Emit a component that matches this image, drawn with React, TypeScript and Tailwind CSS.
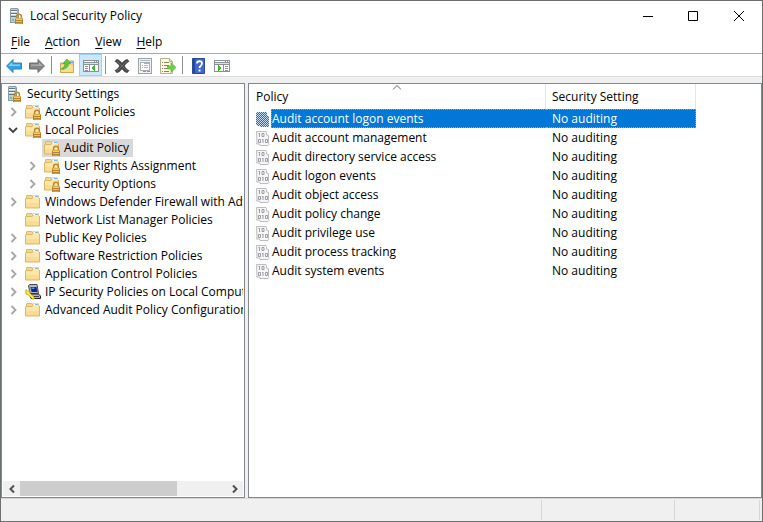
import type { ReactNode } from "react";

function Lock() {
  return (
    <g>
      <path d="M9.600 10.500V8.600a2.400 2.400 0 0 1 4.800 0v1.900" fill="none" stroke="#b58b35" strokeWidth="1.500" />
      <rect x="8" y="10" width="8" height="6" fill="#b5842a" />
      <rect x="8" y="10" width="8" height="1" fill="#dcae4c" />
      <rect x="9" y="11" width="6" height="1" fill="#f0cd74" />
      <rect x="9" y="13" width="6" height="1" fill="#ecc260" />
      <rect x="9" y="15" width="6" height="1" fill="#d29f3c" />
    </g>
  );
}

function ServerIcon() {
  return (
    <svg viewBox="0 0 16 16" className="size-4 shrink-0" aria-hidden="true">
      <path d="M1 1 2 0h7l1 2v13H1z" fill="#8b9ba6" />
      <path d="M2 1h6v13H2z" fill="#c3d0d8" />
      <path d="M8 1h1v13H8z" fill="#a2b1bb" />
      <path d="M2 2h6v1H2zM2 5h6v1H2zM2 8h6v1H2z" fill="#62727e" />
      <path d="M2 3h6v1H2zM2 6h6v1H2z" fill="#f3f8fb" />
      <rect x="3" y="11" width="2" height="2" fill="#5bd46e" />
      <g transform="translate(-2 0)"><Lock /></g>
    </svg>
  );
}

function FolderIcon({ locked = false }: { locked?: boolean }) {
  return (
    <svg viewBox="0 0 16 16" className="size-4 shrink-0" aria-hidden="true">
      <path d="M1 4.500V2l1-1h5l1 1.500h6V14H1z" fill="#dfb968" />
      <path d="M2 2h5v2H2z" fill="#f4d88f" />
      <path d="M8 1.500h5.500V4H8z" fill="#fff" stroke="#d8bf85" strokeWidth=".6" />
      <path d="M10 2h3v1h-3z" fill="#6dbce8" />
      <path d="M1 5h6l1-1h6.500v9.500H1z" fill="#fbe5a8" />
      <path d="M1 9h13.500v4.500H1z" fill="#f8dc94" />
      <path d="M.5 4.500v9.500h14V4" fill="none" stroke="#dcb665" />
      {locked && <Lock />}
    </svg>
  );
}

function ComputerIcon() {
  return (
    <svg viewBox="0 0 16 16" className="size-4 shrink-0" aria-hidden="true">
      <path d="M3.500 1.500 5 .5h7l1.500 9H5z" fill="#b9bcc4" stroke="#45474d" />
      <path d="M5.500 3h6l1 5h-6z" fill="#10238c" />
      <path d="M6.500 3.500h3v1.500h-3z" fill="#49a3ec" />
      <path d="m5 11.500 1.500-1.500h7l2 2v2.500H6z" fill="#b6b6ba" stroke="#222" />
      <path d="M9 12.500h5" stroke="#444" />
      <path d="M.8 5.500 3 7.500l1.500-1 .5 3 5 4.500-2 1.500-4.500-4.500L1 10z" fill="#ffe51f" stroke="#a88c00" strokeWidth=".6" />
      <path d="m2 7.500 2 2 4 4.500" fill="none" stroke="#fff9a4" />
    </svg>
  );
}

function PolicyIcon({ selected = false }: { selected?: boolean }) {
  return (
    <svg viewBox="0 0 14 16" className="h-4 w-3.5 shrink-0" aria-hidden="true">
      <defs>
        <pattern id="policy-dither" width="2" height="2" patternUnits="userSpaceOnUse">
          <path d="M0 0h2v2H0z" fill="#c4dcf0" />
          <path d="M0 0h1v1H0zM1 1h1v1H1z" fill="#0078d7" />
        </pattern>
      </defs>
      {selected ? (
        <path d="M0 2 1 1h9l1 1v2l2 1v10l-1 1H4l-1-1H1l-1-1z" fill="url(#policy-dither)" shapeRendering="crispEdges" />
      ) : (
        <>
          <path d="M.5 1.500h9.500l.5 1v2.500l2 .5v8l.5 1-1 1H4l-.5-1.500h-3l.5-1z" fill="#f6f6f6" stroke="#bcbcbc" />
          <g fill="none" stroke="#9592a2" strokeWidth=".9">
            <path d="M3.500 3v4M2.500 3.500h1M6 3.500h2v3H6zM2.500 9.500h2v3h-2zM7 9v4M6 9.500h1M9.500 9.500h2v3h-2z" />
          </g>
        </>
      )}
    </svg>
  );
}

function BackIcon() {
  return (
    <svg viewBox="0 0 16 16" className="size-4" aria-hidden="true">
      <path d="M.6 8 7 1.500v3.500h8.500v6H7v3.500z" fill="#2fa4e6" stroke="#3c7fa9" />
      <path d="M2.300 8 6 4.300v2.200h8v1.200z" fill="#86d3f7" />
    </svg>
  );
}

function ForwardIcon() {
  return (
    <svg viewBox="0 0 16 16" className="size-4" aria-hidden="true">
      <path d="M15.400 8 9 1.500v3.500H.5v6H9v3.500z" fill="#858585" stroke="#6a6a6a" />
      <path d="M13.700 8 10 4.300v2.200H2v1.200z" fill="#b0b0b0" />
    </svg>
  );
}

function UpFolderIcon() {
  return (
    <svg viewBox="0 0 16 16" className="size-4" aria-hidden="true">
      <path d="M1.500 5h5l1-2h7v11.500h-13z" fill="#f1cc74" stroke="#cda650" />
      <path d="M10 4h4v1h-4z" fill="#64b3dc" />
      <path d="M2 7h12v7H2z" fill="#f8dc91" />
      <path d="M2.500 10.500C5 9.500 6 7.500 6 5.500H4L8 1l3.500 4.500h-2c0 3.500-2.500 5.500-7 6z" fill="#58c943" stroke="#3f9e34" strokeWidth=".6" />
    </svg>
  );
}

function PaneIcon({ action = false }: { action?: boolean }) {
  return (
    <svg viewBox="0 0 16 16" className="size-4" shapeRendering="crispEdges" aria-hidden="true">
      <path d="M0 2h16v12H0z" fill="#8b9297" />
      <path d="M1 3h10v1H1zM12 3h1v1h-1zM14 3h1v1h-1z" fill="#fff" />
      <path d="M1 5h14v1H1z" fill="#dde2e4" />
      {action ? (
        <>
          <path d="M1 7h8v6H1zM10 7h5v6h-5z" fill="#fff" />
          <path d="M4 7h1v1h1v1h1v2H6v1H5v1H4z" fill="#43b52b" />
          <path d="M11 8h3v1h-3zM11 10h3v1h-3zM11 12h3v1h-3z" fill="#8b9297" />
        </>
      ) : (
        <>
          <path d="M1 7h5v6H1zM7 7h8v6H7z" fill="#fff" />
          <path d="M2 8h3v1H2zM2 10h3v1H2zM2 12h3v1H2z" fill="#8b9297" />
          <path d="M12 7v6h-1v-1h-1v-1H9V9h1V8h1V7z" fill="#43b52b" />
        </>
      )}
    </svg>
  );
}

function DeleteIcon() {
  return (
    <svg viewBox="0 0 16 16" className="size-4" aria-hidden="true">
      <path d="m.5 3.500 2.300-2.500C5 1.500 6.500 3 8 4.800 9.500 3 11 1.500 13.200 1l2.300 2.500C13.500 4.500 12 6 10.700 8c1.300 2 2.800 3.500 4.800 4.500L13.200 15C11 14.500 9.500 13 8 11.200 6.500 13 5 14.500 2.800 15L.5 12.500C2.500 11.500 4 10 5.300 8 4 6 2.500 4.500.5 3.500z" fill="#484848" />
      <path d="m3 3 10 10M13 3 3 13" stroke="#6c6c6c" />
    </svg>
  );
}

function PropertiesIcon() {
  return (
    <svg viewBox="0 0 16 16" className="size-4" shapeRendering="crispEdges" aria-hidden="true">
      <path d="M1 0h14v16H1z" fill="#9ba1a6" />
      <path d="M2 1h12v14H2z" fill="#f1f3f5" />
      <path d="M3 4h10v9H3z" fill="#a8aeb2" />
      <path d="M4 6h8v6H4zM4 5h3v1H4z" fill="#fff" />
      <path d="M3 2h10v1H3zM5 7h1v1H5zM5 9h1v1H5zM7 7h4v1H7zM7 9h4v1H7z" fill="#a7b7c3" />
      <path d="M6 13h3v1H6zM10 13h3v1h-3z" fill="#2ab6ee" />
    </svg>
  );
}

function ExportIcon() {
  return (
    <svg viewBox="0 0 16 16" className="size-4" aria-hidden="true">
      <path d="M.5.500h9l3 3v12H.5z" fill="#fff9df" stroke="#b9b092" />
      <path d="M9.500.500v3h3" fill="#e5dcbe" stroke="#b9b092" />
      <path d="M2 4.500h1M4 4.500h5M2 7.500h1M4 7.500h5M2 10.500h1M4 10.500h4M2 13.500h1M4 13.500h5" stroke="#85816f" />
      <path d="M7.500 8h3.500V4.500l5 5-5 5V11H7.500z" fill="#6bd143" stroke="#55b03a" strokeWidth=".6" />
    </svg>
  );
}

function HelpIcon() {
  return (
    <svg viewBox="0 0 14 16" className="h-4 w-3.5" aria-hidden="true">
      <path d="M.5.500h12v15H.5z" fill="#3f68cc" stroke="#2b4a9c" />
      <path d="M1 1h2v14H1z" fill="#2a4798" />
      <path d="M5 5.500C5 2.500 10 2.500 10 5.500c0 2-2.500 2.200-2.500 4.500" fill="none" stroke="#fff" strokeWidth="1.800" />
      <path d="M6.500 11.500h2v2h-2z" fill="#fff" />
    </svg>
  );
}

function Chevron({ open = false }: { open?: boolean }) {
  return (
    <svg viewBox="0 0 10 10" className="size-2.5" aria-hidden="true">
      {open ? (
        <path d="m1 3 4 4 4-4" fill="none" stroke="#404040" strokeWidth="1.800" />
      ) : (
        <path d="m3.500 1 4 4-4 4" fill="none" stroke="#a6a6a6" strokeWidth="1.800" />
      )}
    </svg>
  );
}

type TreeNode = {
  label: string;
  icon: ReactNode;
  state?: "open" | "closed";
  nested?: boolean;
  selected?: boolean;
};

const nodes: TreeNode[] = [
  { label: "Account Policies", icon: <FolderIcon locked />, state: "closed" },
  { label: "Local Policies", icon: <FolderIcon locked />, state: "open" },
  { label: "Audit Policy", icon: <FolderIcon locked />, nested: true, selected: true },
  { label: "User Rights Assignment", icon: <FolderIcon locked />, state: "closed", nested: true },
  { label: "Security Options", icon: <FolderIcon locked />, state: "closed", nested: true },
  { label: "Windows Defender Firewall with Advanced Security", icon: <FolderIcon />, state: "closed" },
  { label: "Network List Manager Policies", icon: <FolderIcon /> },
  { label: "Public Key Policies", icon: <FolderIcon />, state: "closed" },
  { label: "Software Restriction Policies", icon: <FolderIcon />, state: "closed" },
  { label: "Application Control Policies", icon: <FolderIcon />, state: "closed" },
  { label: "IP Security Policies on Local Computer", icon: <ComputerIcon />, state: "closed" },
  { label: "Advanced Audit Policy Configuration", icon: <FolderIcon />, state: "closed" },
];

const policies = [
  "Audit account logon events",
  "Audit account management",
  "Audit directory service access",
  "Audit logon events",
  "Audit object access",
  "Audit policy change",
  "Audit privilege use",
  "Audit process tracking",
  "Audit system events",
];

function TreeRow({ node }: { node: TreeNode }) {
  return (
    <li className={`flex h-[18px] items-center ${node.nested ? "pl-[25px]" : "pl-1.5"}`}>
      <span className="flex w-[15px] shrink-0">
        {node.state && (
          <button aria-label={`Toggle ${node.label}`} className="flex"><Chevron open={node.state === "open"} /></button>
        )}
      </span>
      <button className={`flex h-[18px] items-center gap-1 whitespace-nowrap pr-1 pl-0.5 ${node.selected ? "bg-[#d9d9d9]" : ""}`}>
        {node.icon}
        <span className="leading-4">{node.label}</span>
      </button>
    </li>
  );
}

function MenuItem({ label }: { label: string }) {
  return (
    <button className="leading-4">
      <span className="underline underline-offset-2">{label[0]}</span>{label.slice(1)}
    </button>
  );
}

function ToolButton({ label, children }: { label: string; children: ReactNode }) {
  return <button aria-label={label} className="flex w-[23px] items-center justify-center pt-0.5">{children}</button>;
}

function Separator() {
  return <span className="flex w-[7px] justify-center"><span className="h-[18px] w-px bg-[#8d8d8d]" /></span>;
}

export default function App() {
  return (
    <main className="flex h-screen flex-col border border-[#6e6e6e] bg-[#f0f0f0] font-['Open_Sans',sans-serif] text-[12px] text-black">
      <header className="flex h-[30px] shrink-0 items-center bg-white pl-2">
        <ServerIcon />
        <h1 className="ml-[5px] flex-1 leading-4">Local Security Policy</h1>
        <button aria-label="Minimize" className="flex h-full w-[45px] items-center justify-center">
          <svg viewBox="0 0 10 10" className="size-2.5"><path d="M0 5.500h10" stroke="#000" /></svg>
        </button>
        <button aria-label="Maximize" className="flex h-full w-[46px] items-center justify-center">
          <svg viewBox="0 0 10 10" className="size-2.5"><path d="M.5.500h9v9h-9z" fill="none" stroke="#000" /></svg>
        </button>
        <button aria-label="Close" className="flex h-full w-[46px] items-center justify-center">
          <svg viewBox="0 0 10 10" className="size-2.5"><path d="m0 0 10 10M10 0 0 10" stroke="#000" /></svg>
        </button>
      </header>

      <nav className="flex h-[23px] shrink-0 items-center gap-[15px] border-b border-[#a9abb5] bg-white pl-2.5">
        <MenuItem label="File" />
        <MenuItem label="Action" />
        <MenuItem label="View" />
        <MenuItem label="Help" />
      </nav>

      <div role="toolbar" aria-label="Standard" className="flex h-[23px] shrink-0 items-center border-b border-[#dcdcdc] bg-white pl-px">
        <ToolButton label="Back"><BackIcon /></ToolButton>
        <ToolButton label="Forward"><ForwardIcon /></ToolButton>
        <Separator />
        <ToolButton label="Up one level"><UpFolderIcon /></ToolButton>
        <button aria-label="Show console tree" aria-pressed="true" className="ml-px flex h-[22px] w-[23px] items-center justify-center border border-[#99d1ff] bg-[#cce8ff] pt-0.5"><PaneIcon /></button>
        <Separator />
        <span className="flex pl-px">
          <ToolButton label="Delete"><DeleteIcon /></ToolButton>
          <ToolButton label="Properties"><PropertiesIcon /></ToolButton>
          <ToolButton label="Export list"><ExportIcon /></ToolButton>
        </span>
        <Separator />
        <span className="flex pl-px">
          <ToolButton label="Help"><HelpIcon /></ToolButton>
          <ToolButton label="Show action pane"><PaneIcon action /></ToolButton>
        </span>
      </div>

      <div className="flex min-h-0 flex-1 gap-[3px] pt-1.5">
        <aside className="flex w-[244px] shrink-0 flex-col border border-[#828790] bg-white">
          <ul className="mr-px min-h-0 flex-1 overflow-hidden pt-px">
            <li className="flex h-[18px] items-center pl-[5px]">
              <button className="flex items-center gap-1 leading-4"><ServerIcon />Security Settings</button>
            </li>
            {nodes.map((node) => <TreeRow key={node.label} node={node} />)}
          </ul>
          <div className="mx-px mb-px flex h-[15px] items-center bg-[#f0f0f0]">
            <button aria-label="Scroll left" className="flex w-[17px] justify-center">
              <svg viewBox="0 0 10 10" className="size-2.5"><path d="M7 1.500 3.500 5 7 8.500" fill="none" stroke="#505050" strokeWidth="2" /></svg>
            </button>
            <span className="flex h-full flex-1"><span className="h-full w-[76%] bg-[#cdcdcd]" /></span>
            <button aria-label="Scroll right" className="flex w-[17px] justify-center">
              <svg viewBox="0 0 10 10" className="size-2.5"><path d="M3 1.500 6.500 5 3 8.500" fill="none" stroke="#505050" strokeWidth="2" /></svg>
            </button>
          </div>
        </aside>

        <section className="min-w-0 flex-1 overflow-hidden border border-[#828790] bg-white">
          <table className="w-[447px] table-fixed border-separate border-spacing-0 text-left">
            <colgroup>
              <col className="w-[297px]" />
              <col className="w-[150px]" />
            </colgroup>
            <thead>
              <tr>
                <th className="relative h-[25px] border-r border-[#e5e5e5] p-0 pl-[7px] font-normal leading-4">
                  Policy
                  <svg viewBox="0 0 9 5" className="absolute top-px left-1/2 h-[5px] w-[9px] -translate-x-1/2"><path d="M.5 4.500 4.500.500l4 4" fill="none" stroke="#606060" /></svg>
                </th>
                <th className="h-[25px] border-r border-[#e5e5e5] p-0 pl-1.5 font-normal leading-4">Security Setting</th>
              </tr>
            </thead>
            <tbody>
              {policies.map((policy, i) => (
                <tr key={policy} aria-selected={i === 0}>
                  <td className="p-0">
                    <div className="flex h-[19px] items-center gap-px pl-[7px] leading-4">
                      <PolicyIcon selected={i === 0} />
                      <span className={`flex h-full flex-1 items-center border-y border-l ${i === 0 ? "border-dotted border-[#ff8728] bg-[#0078d7] text-white" : "border-transparent"}`}>{policy}</span>
                    </div>
                  </td>
                  <td className="p-0">
                    <div className={`flex h-[19px] items-center border-y border-r pl-1.5 leading-4 ${i === 0 ? "border-dotted border-[#ff8728] bg-[#0078d7] text-white" : "border-transparent"}`}>No auditing</div>
                  </td>
                </tr>
              ))}
            </tbody>
          </table>
        </section>
      </div>

      <footer className="flex h-[23px] shrink-0 border-t border-[#d7d7d7] py-px pr-0.5">
        <span className="flex-1 border-r border-[#d7d7d7]" />
        <span className="w-[133px] border-r border-[#d7d7d7]" />
        <span className="w-[85px] border-r border-[#d7d7d7]" />
      </footer>
    </main>
  );
}
